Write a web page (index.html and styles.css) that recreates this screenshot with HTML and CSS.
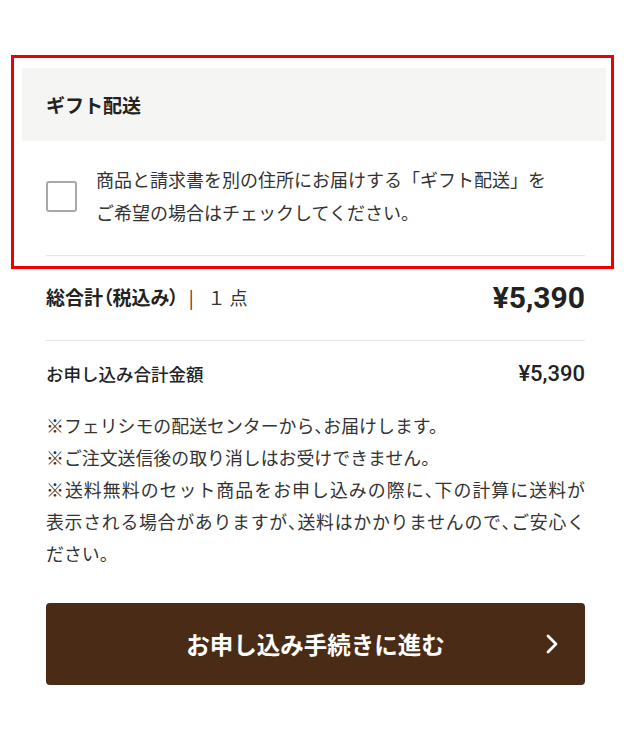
FILE: index.html
```html
<!DOCTYPE html>
<html lang="ja">
<head>
<meta charset="utf-8">
<link rel="stylesheet" href="styles.css">
</head>
<body>
<div class="page">
  <section class="gift-box">
    <h2 class="gift-head">ギフト配送</h2>
    <div class="gift-body">
      <label class="gift-check">
        <span class="checkbox"></span>
        <span class="gift-text">商品と請求書を別の住所にお届けする「ギフト配送」を<br>ご希望の場合はチェックしてください。</span>
      </label>
      <div class="divider"></div>
    </div>
  </section>

  <div class="summary">
    <div class="total-row">
      <div class="total-label"><b>総合計<span class="pq">（税込み）</span></b><span class="count">|<span class="num">１</span>点</span></div>
      <div class="total-price">¥5,390</div>
    </div>
    <div class="divider"></div>
    <div class="sub-row">
      <div class="sub-label">お申し込み合計金額</div>
      <div class="sub-price">¥5,390</div>
    </div>
    <div class="notes">
      <p>※フェリシモの配送センターから<span class="pq">、</span>お届けします。</p>
      <p>※ご注文送信後の取り消しはお受けできません。</p>
      <p><span class="jl">※送料無料のセット商品をお申し込みの際に<span class="pq">、</span>下の計算に送料が</span><span class="jl">表示される場合がありますが<span class="pq">、</span>送料はかかりませんので<span class="pq">、</span>ご安心く</span><span class="blk">ださい。</span></p>
    </div>
    <button class="submit" type="button">
      <span class="submit-text">お申し込み手続きに進む</span>
      <svg class="chev" width="14" height="20" viewBox="0 0 14 20"><polyline points="3,2 11,10 3,18" fill="none" stroke="#fff" stroke-width="2.8" stroke-linecap="round" stroke-linejoin="round"/></svg>
    </button>
  </div>
</div>
</body>
</html>
```

FILE: styles.css
```css
* { box-sizing: border-box; }
html, body { margin: 0; padding: 0; background: #fff; }
body {
  font-family: "Noto Sans CJK JP", "Noto Sans", sans-serif;
  color: #222;
}
.page { padding-top: 55px; padding-bottom: 58px; }
.pq { font-feature-settings: "palt" 1; }

.gift-box {
  margin: 0 12px 0 11px;
  border: 3px solid #ee0000;
  padding: 10px 5px 10px 8px;
}
.gift-head {
  margin: 0;
  background: #f5f5f3;
  height: 73px;
  display: flex;
  align-items: center;
  padding: 0 24px;
  font-size: 19px;
  font-weight: 700;
  color: #222;
}
.gift-body { padding: 22px 21px 0 24px; }
.gift-check {
  display: flex;
  align-items: center;
  gap: 19px;
}
.checkbox {
  flex: 0 0 auto;
  width: 31px;
  height: 31px;
  border: 2px solid #a8a8a8;
  border-radius: 3px;
  background: #fff;
}
.gift-text {
  font-size: 18px;
  line-height: 33px;
  color: #333;
}
.divider { height: 1px; background: #e6e6e6; }
.gift-body .divider { margin-top: 26px; }

.summary { padding: 0 41px 0 46px; }
.total-row {
  display: flex;
  justify-content: space-between;
  align-items: center;
  padding: 11px 0 26px;
  height: 71px;
}
.total-label { font-size: 19px; line-height: 32px; color: #222; }
.total-label b { font-weight: 700; }
.count { margin-left: 10px; font-weight: 400; color: #333; font-size: 18px; }
.num { margin: 0 4px 0 14px; }
.total-price {
  font-family: Roboto, "Liberation Sans", sans-serif;
  font-weight: 700;
  font-size: 30px;
  color: #222;
}
.sub-row {
  display: flex;
  justify-content: space-between;
  align-items: center;
  padding: 17px 0 19px;
  line-height: 32px;
}
.sub-label { font-size: 17.5px; font-weight: 500; color: #222; }
.sub-price {
  font-family: Roboto, "Liberation Sans", sans-serif;
  font-weight: 500;
  font-size: 22px;
  color: #222;
}
.notes { font-size: 17.9px; line-height: 32px; color: #333; text-align: justify; }
.notes p { margin: 0; }
.jl { display: block; text-align-last: justify; }
.blk { display: block; }

.submit {
  position: relative;
  display: flex;
  align-items: center;
  justify-content: center;
  width: 100%;
  height: 82px;
  margin-top: 34px;
  border: none;
  border-radius: 4px;
  background: #4a2c16;
  color: #fff;
  font-family: "Noto Sans CJK JP", sans-serif;
  font-size: 23.5px;
  font-weight: 700;
  cursor: pointer;
}
.chev { position: absolute; right: 26px; top: 31px; }
```
